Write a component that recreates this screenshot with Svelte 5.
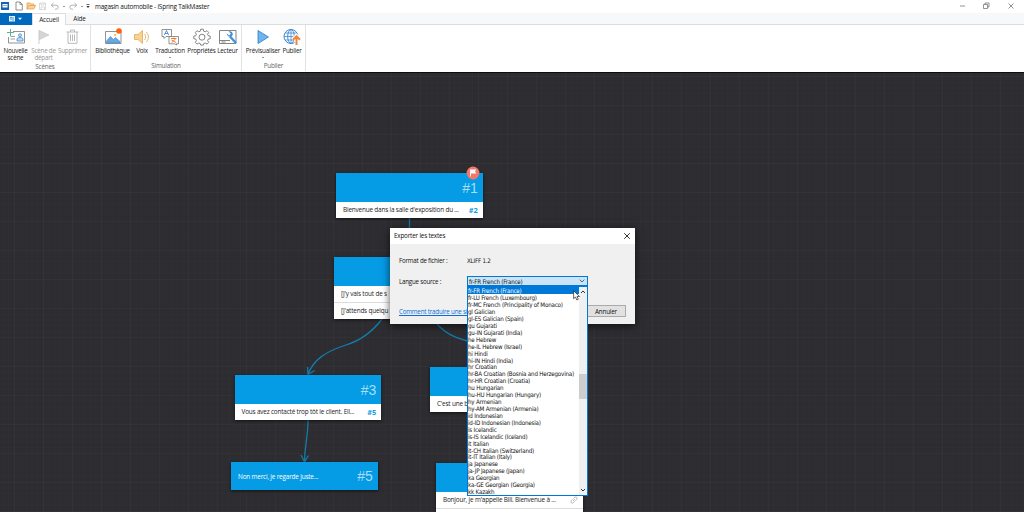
<script lang="ts">
  const tools = ['new', 'open', 'save', 'undo', 'redo'];

  const groups = [
    {
      name: 'Scènes',
      width: 91,
      buttons: [
        { icon: 'scene', label: 'Nouvelle', second: 'scène', width: 31 },
        { icon: 'flag', label: 'Scène de', second: 'départ', width: 25, disabled: true },
        { icon: 'trash', label: 'Supprimer', width: 33, disabled: true },
      ],
    },
    {
      name: 'Simulation',
      width: 151,
      buttons: [
        { icon: 'library', label: 'Bibliothèque', width: 43 },
        { icon: 'voice', label: 'Voix', width: 16 },
        { icon: 'translate', label: 'Traduction', width: 40, menu: true },
        { icon: 'gear', label: 'Propriétés', width: 23 },
        { icon: 'player', label: 'Lecteur', width: 29 },
      ],
    },
    {
      name: 'Publier',
      width: 64,
      buttons: [
        { icon: 'play', label: 'Prévisualiser', width: 42, menu: true },
        { icon: 'publish', label: 'Publier', width: 16 },
      ],
    },
  ];

  const nodes = [
    { id: '#1', x: 336, y: 173, head: 29, rows: [["Bienvenue dans la salle d'exposition du ...", '#2']], start: true },
    { id: '', x: 334, y: 257, head: 29, rows: [["[J'y vais tout de s", ''], ["[J'attends quelqu", '']] },
    { id: '#3', x: 234.5, y: 375, head: 29, rows: [['Vous avez contacté trop tôt le client. Ell...', '#5']] },
    { id: '', x: 430, y: 367, head: 29, rows: [["C'est une b", '']] },
    { id: '#5', x: 231, y: 462, head: 28, title: 'Non merci, je regarde juste...', rows: [] },
    { id: '', x: 436, y: 463, head: 29, rows: [["Bonjour, je m'appelle Bill. Bienvenue à ...", 'link'], ['', '']] },
  ];

  const languages = [
    'fr-FR French (France)',
    'fr-LU French (Luxembourg)',
    'fr-MC French (Principality of Monaco)',
    'gl Galician',
    'gl-ES Galician (Spain)',
    'gu Gujarati',
    'gu-IN Gujarati (India)',
    'he Hebrew',
    'he-IL Hebrew (Israel)',
    'hi Hindi',
    'hi-IN Hindi (India)',
    'hr Croatian',
    'hr-BA Croatian (Bosnia and Herzegovina)',
    'hr-HR Croatian (Croatia)',
    'hu Hungarian',
    'hu-HU Hungarian (Hungary)',
    'hy Armenian',
    'hy-AM Armenian (Armenia)',
    'id Indonesian',
    'id-ID Indonesian (Indonesia)',
    'is Icelandic',
    'is-IS Icelandic (Iceland)',
    'it Italian',
    'it-CH Italian (Switzerland)',
    'it-IT Italian (Italy)',
    'ja Japanese',
    'ja-JP Japanese (Japan)',
    'ka Georgian',
    'ka-GE Georgian (Georgia)',
    'kk Kazakh',
  ];

  let selected = $state(languages[0]);
</script>

{#snippet toolIcon(name: string)}
  <svg class="tool" viewBox="0 0 10 10" fill="none">
    {#if name === 'new'}
      <path d="M2 1h4l2.3 2.3V9H2zM6 1v2.4h2.3" stroke="#666" stroke-width=".7" />
    {:else if name === 'open'}
      <path d="M1 8V2h3l1 1h3v1.5M1 8l1.7-3.5h6.8L7.8 8z" fill="#fbd29a" stroke="#e6a14c" stroke-width=".8" />
    {:else if name === 'save'}
      <path d="M1.500 2h6v6.500h-6zM3 2v2h3V2M3 8.500V6h3.500v2.500" stroke="#ccc" stroke-width=".7" />
    {:else if name === 'undo'}
      <path d="M3.500 2 1.200 4.200l2.300 2.200M1.500 4.200h4.700a2 2 0 0 1 0 4H5" stroke="#aaa" stroke-width=".9" />
    {:else}
      <path d="m6.500 2 2.300 2.200-2.300 2.200M8.500 4.200H3.800a2 2 0 0 0 0 4H5" stroke="#aaa" stroke-width=".9" />
    {/if}
  </svg>
{/snippet}

{#snippet ribbonIcon(name: string)}
  <svg class="ribbon-icon" viewBox="0 0 20 18" fill="none">
    {#if name === 'scene'}
      <path d="M7 3.500h11.500v11.500h-16V9" stroke="#777" stroke-width=".8" />
      <path d="M4.500 1v7M1 4.500h7" stroke="#55b68a" stroke-width="1" />
      <circle cx="14" cy="7.300" r="1.500" stroke="#4a90d0" fill="#b9daf5" stroke-width=".8" />
      <path d="M11 13v-2c0-2 6-2 6 0v2z" stroke="#4a90d0" fill="#b9daf5" stroke-width=".8" />
      <path d="M4.500 8.500H9M4.500 11H9" stroke="#888" stroke-width=".8" />
    {:else if name === 'flag'}
      <path d="M5 2v14" stroke="#ccc" />
      <path d="m5.500 2.500 9.500 4.500-9.500 4.500z" fill="#d5d5d5" stroke="#c4c4c4" stroke-width=".6" />
    {:else if name === 'trash'}
      <path d="M3.500 4h12M7.500 4V2h4v2M5 4v11.300h9V4M7.500 6.500v6.500M9.500 6.500v6.500M11.500 6.500v6.500" stroke="#bbb" />
    {:else if name === 'library'}
      <path d="M2.500 3.500H18v12H2.500z" stroke="#777" stroke-width=".8" fill="#fff" />
      <path d="m3.500 13 4-4.500 3 3 2-2 4.500 4v1.500H3.500z" fill="#65a9e4" stroke="#3c86c7" stroke-width=".6" />
      <circle cx="12" cy="7" r="1.200" fill="#ffc16e" />
      <circle cx="16" cy="3" r="2.800" fill="#ff6208" />
    {:else if name === 'voice'}
      <path d="M2.500 6.500H6l4.500-4v13l-4.500-4H2.500z" fill="#fad28f" stroke="#d9a44c" stroke-width=".7" />
      <path d="M12.500 6c1.600 1.700 1.600 4.300 0 6M14.300 4c2.800 2.900 2.800 7.100 0 10" stroke="#ddb064" stroke-width=".9" />
    {:else if name === 'translate'}
      <path d="M2 1.500h9.500v7H6l-2 2v-2H2z" fill="#fff" stroke="#777" stroke-width=".8" />
      <path d="m4.300 7 2.200-4.500L8.700 7M5 5.500h3" stroke="#3d8dda" stroke-width=".9" />
      <path d="M9 8.500h9.500v7.300h-2V17l-2-1.200H9z" fill="#fff" stroke="#777" stroke-width=".8" />
      <path d="M11 10.500h5.500M13.700 9.500v1M15.700 10.700l-4 4M11.500 12l4.800 2.700" stroke="#f08030" />
    {:else if name === 'gear'}
      <path d="m8.300 3.200.4-2h2.600l.4 2 1.500.6 1.800-1.100 1.700 1.700-1.100 1.800.6 1.500 2 .4v2.600l-2 .4-.6 1.500 1.100 1.800-1.700 1.700-1.800-1.100-1.500.6-.4 1.500H8.700l-.4-1.500-1.500-.6L5 16.100l-1.700-1.700 1.100-1.800-.6-1.500-2-.4V8.100l2-.4.6-1.500-1.100-1.800L5 2.700l1.800 1.100z" stroke="#777" stroke-width=".9" />
      <circle cx="10" cy="9.200" r="3" stroke="#777" stroke-width=".9" />
    {:else if name === 'player'}
      <path d="M1.500 2.500H18v13H1.500zM1.500 12.500H12M3.500 14h4" stroke="#777" stroke-width=".9" />
      <path d="m12 8.500 6 6.500" stroke="#408fd8" stroke-width="2.300" />
      <path d="M8.700 5.300 11 7.600l1.900-1.900-2.200-2.200c2-.9 4.500.8 4 3.200-.9 3.300-5.500 2.700-6-1.400z" fill="#408fd8" />
    {:else if name === 'play'}
      <path d="m5 2.500 10.500 6.500L5 15.500z" fill="#70b4ef" stroke="#2c7fc7" stroke-width=".8" />
    {:else}
      <circle cx="9" cy="8.500" r="7" stroke="#3e8bd0" />
      <ellipse cx="9" cy="8.500" rx="3.300" ry="7" stroke="#3e8bd0" />
      <path d="M9 1.500v14M2 8.500h14M3 5h12M3 12h12" stroke="#3e8bd0" stroke-width=".8" />
      <path d="M14.500 17V9M11 11.700l3.500-3.500 3.500 3.500" stroke="#fff" stroke-width="4" />
      <path d="M14.500 17V9M11 11.700l3.500-3.500 3.500 3.500" stroke="#f1853b" stroke-width="2" />
    {/if}
  </svg>
{/snippet}

<div class="app">
  <header class="titlebar">
    <svg class="logo" viewBox="0 0 8 8">
      <path d="M0 0h8v8H0z" fill="#1464b4" />
      <path d="M1.500 2h5v3.500h-5z" fill="#fff" />
      <path d="M2.500 3h1v1h-1zm2 0h1v1h-1z" fill="#1464b4" />
    </svg>
    <div class="quick">
      {#each tools as tool}
        {@render toolIcon(tool)}
        {#if tool === 'undo' || tool === 'redo'}<i class="dot"></i>{/if}
      {/each}
      <svg class="more" viewBox="0 0 4 6"><path d="M.5 1h3v.8h-3zM.3 3h3.400L2 5z" fill="#333" /></svg>
    </div>
    <span class="title">magasin automobile - iSpring TalkMaster</span>
    <svg class="window-buttons" viewBox="0 0 60 12" fill="none" stroke="#777" stroke-width=".8">
      <path d="M1 6h5M24.500 4.500h4v4h-4zM26 4.500V3h4v4h-1.500M49.500 3.500l5 5m0-5-5 5" />
    </svg>
  </header>

  <nav class="tabs">
    <button class="file" aria-label="Menu">
      <svg viewBox="0 0 14 6"><path d="M0 0h6v5.500H0z" fill="#dcecf8" /><path d="M1 1.500h2M1 3h2M4 1v4" stroke="#0067b8" stroke-width=".6" /><path d="M9 1.700h4L11 4z" fill="#fff" /></svg>
    </button>
    <button class="tab active">Accueil</button>
    <button class="tab">Aide</button>
  </nav>

  <div class="ribbon">
    {#each groups as group}
      <section class="group" style:width="{group.width}px">
        <div class="buttons">
          {#each group.buttons as button}
            <button class="command" class:disabled={button.disabled} style:width="{button.width}px">
              {@render ribbonIcon(button.icon)}
              <span>{button.label}</span>
              {#if button.second}<span>{button.second}</span>{/if}
              {#if button.menu}<i class="caret"></i>{/if}
            </button>
          {/each}
        </div>
        <div class="group-name">{group.name}</div>
      </section>
    {/each}
  </div>

  <main class="canvas">
    <svg class="wires" viewBox="0 72 1024 440" fill="none">
      <path d="M409.500 217v38" />
      <path d="M382 319c-9 12-20 21-36 26-22 7-32 15-38 29M307.500 367l.5 7.500 6.500-4" />
      <path d="M308 420c0 18-3 23-3.500 41M301 455l3.500 7 4-6.500" />
      <path d="M437 324c9 10 18 14 38 19 18 7 26 12 30 24" />
    </svg>

    {#each nodes as node}
      <article class="node" style:left="{node.x}px" style:top="{node.y - 72}px">
        <div class="head" style:height="{node.head}px">
          <span class="node-title">{node.title ?? ''}</span>
          <span class="number">{node.id}</span>
        </div>
        {#each node.rows as [text, target]}
          <div class="answer">
            <span>{text}</span>
            {#if target === 'link'}
              <svg class="link" viewBox="0 0 8 8" fill="none" stroke="#aaa" stroke-width=".8"><path d="M3 5 5 3M3.300 2.800l1.500-1.600c1.500-1 3 .6 2 2L5.400 4.700M4.700 5.200 3.200 6.800c-1.500 1-3-.6-2-2l1.400-1.500" /></svg>
            {:else}
              <b>{target}</b>
            {/if}
          </div>
        {/each}
        {#if node.start}
          <svg class="start" viewBox="0 0 14 14"><circle cx="7" cy="7" r="6.400" fill="#f47769" /><path d="M4.500 3.500v7" stroke="#fff" stroke-width=".9" /><path d="M4.500 3.500h5.800L9 5.500l1.300 2H4.500z" fill="#fff" /></svg>
        {/if}
      </article>
    {/each}
  </main>

  <div class="dialog" role="dialog" aria-label="Exporter les textes">
    <div class="dialog-title">
      <span>Exporter les textes</span>
      <svg viewBox="0 0 8 8"><path d="m1.200 1.200 5.600 5.600m0-5.600L1.200 6.800" stroke="#222" stroke-width=".9" /></svg>
    </div>
    <div class="form">
      <span>Format de fichier :</span>
      <span class="value">XLIFF 1.2</span>
      <span>Langue source :</span>
      <button class="combo">
        {selected}
        <svg viewBox="0 0 6 4"><path d="m.7.700 2.300 2.300L5.300.7" fill="none" stroke="#444" stroke-width=".8" /></svg>
      </button>
    </div>
    <div class="actions">
      <span class="help">Comment traduire une sim</span>
      <button class="cancel">Annuler</button>
    </div>
  </div>

  <div class="dropdown">
    <ul>
      {#each languages as language}
        <li class:selected={language === selected}>{language}</li>
      {/each}
    </ul>
    <div class="scrollbar">
      <svg viewBox="0 0 6 4"><path d="M1 3 3 1l2 2" /></svg>
      <i class="thumb"></i>
      <svg viewBox="0 0 6 4"><path d="m1 1 2 2 2-2" /></svg>
    </div>
  </div>

  <svg class="cursor" viewBox="0 0 8 11"><path d="M.6.700v8l1.900-1.700 1.300 3 1.500-.7L4 6.500h2.500z" fill="#fff" stroke="#222" stroke-width=".7" /></svg>
</div>

<style>
  :global(body) {
    overflow: hidden;
  }

  .app {
    position: relative;
    display: flex;
    flex-direction: column;
    width: 1024px;
    height: 512px;
    overflow: hidden;
    background: #fff;
    color: #222;
    font-family: 'Open Sans', 'Noto Sans', sans-serif;
    font-size: 6.4px;
    letter-spacing: -0.18px;
  }

  .app * {
    box-sizing: border-box;
  }

  button {
    padding: 0;
    border: none;
    background: transparent;
    color: inherit;
    font: inherit;
    letter-spacing: inherit;
  }

  .titlebar {
    display: flex;
    flex: none;
    align-items: center;
    height: 13px;
    padding: 0 5px 1px 1px;
  }

  .logo {
    width: 8px;
    height: 8px;
    margin-right: 5px;
  }

  .quick {
    display: flex;
    align-items: center;
    width: 81px;
    gap: 2px;
  }

  .tool {
    flex: none;
    width: 10px;
    height: 10px;
  }

  .dot {
    flex: none;
    width: 2px;
    height: 1px;
    margin: 0 1px;
    background: #999;
  }

  .more {
    width: 4px;
    height: 6px;
  }

  .title {
    flex: 1;
    color: #111;
  }

  .window-buttons {
    width: 60px;
    height: 12px;
  }

  .tabs {
    display: flex;
    flex: none;
    height: 12px;
    border-bottom: 1px solid #ddd;
    background: #f6f8f9;
  }

  .file {
    display: grid;
    place-items: center;
    width: 32px;
    height: 12px;
    background: #0069bd;
  }

  .file svg {
    width: 14px;
    height: 6px;
  }

  .tab {
    width: 27px;
  }

  .tab.active {
    width: 34px;
    height: 12px;
    border: 1px solid #ddd;
    border-width: 1px 1px 0;
    background: #fff;
  }

  .ribbon {
    display: flex;
    flex: none;
    height: 47px;
  }

  .group {
    display: flex;
    flex-direction: column;
    height: 46px;
    border-right: 1px solid #e2e2e2;
  }

  .buttons {
    display: flex;
    height: 38px;
    padding-top: 3px;
  }

  .command {
    display: flex;
    flex: none;
    flex-direction: column;
    align-items: center;
    white-space: nowrap;
    font-size: 6.3px;
    line-height: 7px;
    letter-spacing: -0.22px;
  }

  .command.disabled {
    color: #999;
  }

  .ribbon-icon {
    flex: none;
    width: 20px;
    height: 18px;
    margin-bottom: 1px;
  }

  .caret {
    margin-top: 3px;
    border: 1.5px solid transparent;
    border-top-color: #333;
  }

  .group-name {
    color: #666;
    font-size: 6.3px;
    line-height: 11px;
    text-align: center;
  }

  .canvas {
    position: relative;
    flex: 1;
    border-top: 1px solid #0d0d10;
    background-color: #2d2c31;
    background-image:
      linear-gradient(#ffffff05 1px, transparent 1px),
      linear-gradient(90deg, #ffffff05 1px, transparent 1px),
      linear-gradient(#ffffff02 1px, transparent 1px),
      linear-gradient(90deg, #ffffff02 1px, transparent 1px);
    background-position: 14px 3px;
    background-size: 29px 29px, 29px 29px, 5.8px 5.8px, 5.8px 5.8px;
  }

  .wires {
    position: absolute;
    top: -1px;
    left: 0;
    width: 1024px;
    height: 440px;
    stroke: #147ca8;
    stroke-width: 1.3;
  }

  .node {
    position: absolute;
    width: 146.5px;
    margin-top: -1px;
    background: #fff;
    box-shadow: 0 1px 3px #0009;
  }

  .head {
    display: flex;
    align-items: center;
    justify-content: space-between;
    padding: 0 5px 0 7px;
    background: #059be5;
  }

  .node-title {
    color: #fff;
  }

  .number {
    color: #a8def8;
    font-family: 'Liberation Sans', sans-serif;
    font-size: 14px;
  }

  .answer {
    display: flex;
    align-items: center;
    justify-content: space-between;
    height: 15.5px;
    padding: 0 5px 0 7px;
    font-size: 6.4px;
    white-space: nowrap;
  }

  .answer + .answer {
    height: 17px;
    border-top: 1px solid #ddd;
  }

  .answer b {
    color: #139bdc;
    font-size: 7.4px;
  }

  .link {
    width: 8px;
    height: 8px;
  }

  .start {
    position: absolute;
    top: -7px;
    left: 130px;
    width: 14px;
    height: 14px;
  }

  .dialog {
    position: absolute;
    top: 228px;
    left: 390px;
    width: 245px;
    height: 96px;
    background: #f0f0f0;
    box-shadow: 0 2px 8px #000a;
    color: #111;
    font-size: 6.3px;
  }

  .dialog-title {
    display: flex;
    align-items: center;
    justify-content: space-between;
    height: 16px;
    padding: 0 4px 1px;
    background: #fff;
  }

  .dialog-title svg {
    width: 8px;
    height: 8px;
  }

  .form {
    display: grid;
    grid-template-columns: 68px 121px;
    grid-template-rows: 20px 10px;
    row-gap: 6px;
    align-items: center;
    padding: 6px 0 0 9px;
    font-size: 6.2px;
    letter-spacing: -0.22px;
  }

  .form .value {
    font-family: 'DejaVu Sans Condensed', 'DejaVu Sans', sans-serif;
  }

  .combo {
    display: flex;
    align-items: center;
    justify-content: space-between;
    width: 121px;
    height: 10px;
    padding: 0 2px 0 1px;
    border: 1px solid #0078d7;
    background: #cce4f7;
  }

  .combo svg {
    width: 6px;
    height: 4px;
  }

  .actions {
    display: flex;
    align-items: center;
    justify-content: space-between;
    padding: 19px 9px 0;
  }

  .help {
    color: #0a6cd8;
    font-size: 6.2px;
    text-decoration: underline;
    white-space: nowrap;
  }

  .cancel {
    width: 40px;
    height: 12px;
    border: 1px solid #aaa;
    background: #e1e1e1;
  }

  .combo,
  .dropdown {
    font-family: 'DejaVu Sans Condensed', 'DejaVu Sans', sans-serif;
    font-size: 6.2px;
    letter-spacing: -0.2px;
  }

  .dropdown {
    position: absolute;
    top: 286px;
    left: 467px;
    display: flex;
    width: 121px;
    height: 210px;
    border: 1px solid #0078d7;
    background: #fff;
    color: #111;
  }

  ul {
    flex: 1;
    margin: 0;
    padding: 0.3px 0 0;
    list-style: none;
  }

  li {
    height: 6.93px;
    line-height: 8px;
    white-space: nowrap;
  }

  .selected {
    background: #0078d7;
    color: #fff;
  }

  .scrollbar {
    display: flex;
    flex-direction: column;
    align-items: center;
    width: 8px;
    padding: 3px 0;
    background: #f0f0f0;
  }

  .scrollbar svg {
    flex: none;
    width: 6px;
    height: 4px;
    fill: none;
    stroke: #333;
  }

  .thumb {
    flex: none;
    width: 8px;
    height: 25px;
    margin: 80px 0 auto;
    background: #cdcdcd;
  }

  .cursor {
    position: absolute;
    top: 290px;
    left: 573px;
    width: 8px;
    height: 11px;
  }
</style>
